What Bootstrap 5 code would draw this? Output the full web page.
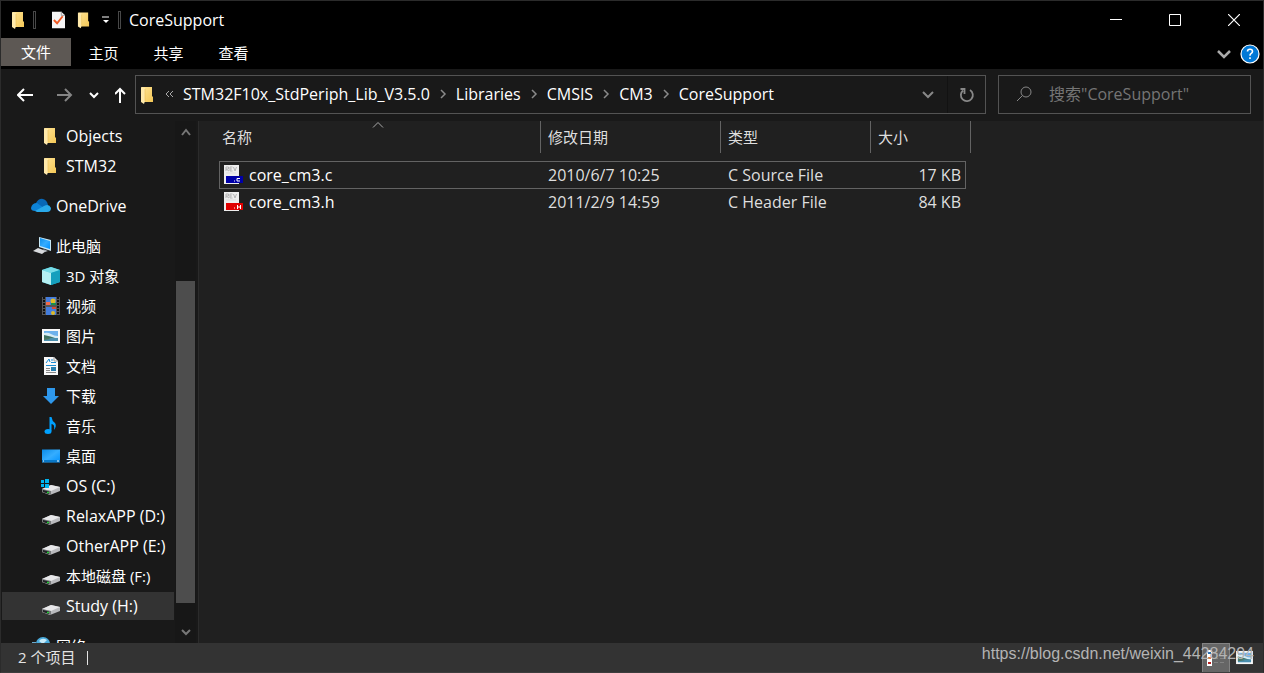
<!DOCTYPE html>
<html lang="zh-CN">
<head>
<meta charset="utf-8">
<meta name="viewport" content="width=device-width, initial-scale=1">
<title>CoreSupport</title>
<link href="https://cdn.jsdelivr.net/npm/bootstrap@5.3.0/dist/css/bootstrap.min.css" rel="stylesheet">
<style>
  body { font: 16px/20px "Open Sans", "Noto Sans CJK SC", sans-serif; color: #fff; background: #191919; }
  svg { flex: none; display: block; }
  button, .plain-link { border: 0; background: none; padding: 0; color: inherit; display: flex; align-items: center; justify-content: center; text-decoration: none; }
  .zh { font-size: 15px; }
  .window-frame { border: 1px solid #2b2b2b; border-bottom-color: #3d3d3d; }
  .title-bar { height: 37px; background: #000; padding-left: 6px; }
  .quick-access { height: 37px; }
  .separator { width: 3px; height: 18px; border: 1px solid #484848; }
  .caption-button { width: 59px; height: 37px; }
  .ribbon-tabs { height: 31px; background: #000; }
  .ribbon-tab { width: 65px; height: 30px; font-size: 15px; }
  .ribbon-tab.file-tab { width: 70px; height: 28px; background: #5d5854; }
  .ribbon-tools { padding-right: 3px; gap: 8px; }
  .address-row { height: 52px; padding: 6px 12px 7px 0; }
  .nav-buttons { width: 134px; padding-left: 12px; }
  .field-box { border: 1px solid #535353; height: 39px; }
  .crumbs { padding-bottom: 2px; }
  .crumb-start { margin: 0 10px 0 11px; }
  .crumb-sep { margin: 0 9px; color: #8a8a8a; }
  .refresh-button { width: 38px; height: 37px; border-left: 1px solid #121212; }
  .search-box { width: 253px; margin-left: 12px; padding: 0 16px 2px 17px; }
  .search-box input { background: none; border: 0; outline: 0; color: #fff; min-width: 0; padding: 0; margin-left: 17px; }
  .search-box input::placeholder { color: #757575; opacity: 1; }
  .tree-pane { width: 174px; padding-left: 1px; }
  .tree-item { height: 30px; padding-left: 39px; justify-content: flex-start; gap: 5px; border: solid transparent; border-width: 1px 0; background-clip: padding-box; white-space: nowrap; width: 172px; }
  .tree-item svg { width: 20px; height: 20px; }
  .tree-item.top-level { padding-left: 29px; }
  .tree-item.top-level.spaced { margin-top: 10px; }
  .tree-item.selected { background-color: #333; }
  .scroll-bar { width: 23px; background: #171717; border-right: 2px solid #191919; }
  .scroll-thumb { width: 19px; margin-left: 1px; flex: 322 0 0; background: #4d4d4d; }
  .scroll-arrow { width: 21px; }
  .scroll-space-top { flex: 138 0 0; }
  .scroll-space-bottom { flex: 18 0 0; }
  .files-pane { background: #202020; padding-left: 20px; border-left: 1px solid #2b2b2b; }
  .files-table { width: 752px; table-layout: fixed; border-collapse: separate; border-spacing: 0; color: #dedede; }
  .files-table th { font-weight: 400; font-size: 15px; height: 32px; padding: 0 7px; border-right: 1px solid #636363; position: relative; }
  .files-table th:first-child { padding-left: 3px; }
  .files-table tbody::before { content: ""; display: block; height: 8px; }
  .files-table td { height: 28px; padding: 0 7px; border: solid transparent; border-width: 1px 0; white-space: nowrap; }
  .files-table tr + tr td { height: 26px; border-top: 0; }
  .files-table td:first-child { border-left-width: 1px; padding-left: 3px; color: #fff; }
  .files-table td:last-child { border-right-width: 1px; padding-right: 4px; text-align: right; }
  .files-table .focused td { border-color: #636363; }
  .sort-arrow { position: absolute; left: 50%; top: 0; margin-left: -8px; }
  .status-bar { height: 29px; background: #333; padding-left: 17px; color: #e4e4e4; }
  .status-text { padding-bottom: 2px; gap: 12px; }
  .status-divider { width: 1px; height: 14px; background: #e4e4e4; margin-top: 2px; }
  .view-buttons { padding-right: 5px; }
  .view-button { width: 28px; height: 29px; }
  .view-button.active-view { background: #666; border: 1px solid #838383; border-bottom: 0; }
  .watermark { position: absolute; right: 9px; bottom: 8px; font: 16px/20px "Liberation Sans", Arial, sans-serif; color: #b4b4b4; }
</style>
</head>
<body>
<svg width="0" height="0" class="position-absolute" aria-hidden="true">
  <defs>
    <linearGradient id="gold" x1="0" x2="1" y2="1"><stop stop-color="#ffe394"/><stop offset="1" stop-color="#f3c756"/></linearGradient>
    <linearGradient id="sky" x1="0" x2="1" y2="1"><stop stop-color="#0a8be8"/><stop offset=".5" stop-color="#35adff"/><stop offset="1" stop-color="#0091ff"/></linearGradient>
    <symbol id="folder" viewBox="0 0 14 18"><path d="M2 1H12V10L13 11V16H2Z" fill="url(#gold)"/><path d="M1 1L5 2V15L4 18L1 16Z" fill="#ffe9aa"/><path d="M5 3V15" stroke="#e9bd52" stroke-width=".6"/></symbol>
    <symbol id="drive" viewBox="0 0 20 20"><path d="M1 13L10 9L19 11V15L9 19L1 16Z" fill="#b9babd"/><path d="M1 13L10 9L19 11L10 15Z" fill="#e8e8ea"/><path d="M1 13L10 15V19L1 16Z" fill="#77797b"/><path d="M2 14L8 15.500V18L2 16Z" fill="#202325"/><path d="M6 16.500h2" stroke="#25ce37" stroke-width="1.500"/></symbol>
    <symbol id="photo" viewBox="0 0 20 16"><path d="M1 1H19V15H1Z" fill="#f8f8f8"/><path d="M3 3H17V13H3Z" fill="#6db1ec"/><path d="M3 5Q7 4 10 6T17 8V10H3Z" fill="#d5ebf5"/><path d="M3 7Q9 8 17 11H3Z" fill="#3f7464"/><path d="M3 10H17V13H3Z" fill="#4a8fae"/><path d="M3 10Q7 9 10 11L3 12Z" fill="#4d7761"/></symbol>
    <symbol id="source" viewBox="0 0 22 20"><path d="M1 0H16V19H1Z" fill="#eee"/><path d="M3 6V2H5.500V4H3L6 6M9.500 2H7V6H9.500M7 4H9M10.500 2L12 6L13.500 2" fill="none" stroke="#b5b5b5"/><path d="M3 8H13" stroke="#ddd"/></symbol>
    <symbol id="down" viewBox="0 0 14 10"><path d="M2 2L7 7L12 2" fill="none" stroke="currentColor" stroke-width="2"/></symbol>
    <symbol id="right" viewBox="0 0 8 12"><path d="M2 2L6 6L2 10" fill="none" stroke="currentColor" stroke-width="1.500"/></symbol>
  </defs>
</svg>

<div class="window-frame vh-100 d-flex flex-column overflow-hidden position-relative">
  <header class="title-bar d-flex align-items-start flex-shrink-0">
    <div class="quick-access d-flex align-items-center">
      <svg width="14" height="18" class="ms-1"><use href="#folder"/></svg>
      <span class="separator ms-2"></span>
      <button aria-label="属性" class="ms-3"><svg width="13" height="18" viewBox="0 0 14 18"><path d="M0 0H10L14 4V18H0Z" fill="#f5f5f5"/><path d="M10 0V4H14" fill="none" stroke="#999"/><path d="M2 9L5.500 12.500L11.500 5" fill="none" stroke="#f15a24" stroke-width="2"/></svg></button>
      <button aria-label="新建文件夹" class="ms-2 ps-1"><svg width="13" height="18"><use href="#folder"/></svg></button>
      <button aria-label="自定义快速访问工具栏" class="ms-2 ps-1"><svg width="8" height="8"><path d="M0 1H7" stroke="#fff"/><path d="M1 4H7L4 7Z" fill="#fff"/></svg></button>
      <span class="separator mx-2 ms-2"></span>
      <span class="window-title">CoreSupport</span>
    </div>
    <div class="ms-auto d-flex">
      <button class="caption-button" aria-label="最小化"><svg width="12" height="12"><path d="M0 5.500H12" stroke="#fff"/></svg></button>
      <button class="caption-button" aria-label="最大化"><svg width="12" height="12"><path d="M.5.500H11.500V11.500H.5Z" fill="none" stroke="#fff"/></svg></button>
      <button class="caption-button" aria-label="关闭"><svg width="12" height="12"><path d="M0 0L12 12M12 0L0 12" stroke="#fff" stroke-width="1.200"/></svg></button>
    </div>
  </header>

  <nav class="ribbon-tabs d-flex align-items-start flex-shrink-0">
    <a href="#" class="plain-link ribbon-tab file-tab">文件</a>
    <a href="#" class="plain-link ribbon-tab">主页</a>
    <a href="#" class="plain-link ribbon-tab">共享</a>
    <a href="#" class="plain-link ribbon-tab">查看</a>
    <div class="ribbon-tools ms-auto d-flex align-items-center h-100">
      <button aria-label="展开功能区" style="color:#aaa"><svg width="16" height="12"><path d="M2 3L8 9L14 3" fill="none" stroke="currentColor" stroke-width="2.500"/></svg></button>
      <button aria-label="帮助"><svg width="20" height="20"><circle cx="10" cy="10" r="9" fill="#0078d7" stroke="#fff" stroke-width="1.200"/><path d="M7.500 7.500Q7.500 5.300 10 5.300T12.500 7.500Q12.500 8.700 11 9.600Q10 10.200 10 11.700M10 13.300V15" fill="none" stroke="#fff" stroke-width="1.600"/></svg></button>
    </div>
  </nav>

  <div class="address-row d-flex flex-shrink-0">
    <div class="nav-buttons d-flex align-items-center">
      <button aria-label="后退" class="ms-1"><svg width="16" height="14"><path d="M16 7H1M7 1L1 7L7 13" fill="none" stroke="#fff" stroke-width="2"/></svg></button>
      <button aria-label="前进" class="ms-4" style="color:#858585"><svg width="16" height="14"><path d="M0 7H14M8 1L14 7L8 13" fill="none" stroke="currentColor" stroke-width="2"/></svg></button>
      <button aria-label="最近位置" class="ms-3"><svg width="10" height="8"><path d="M1 2L5 6L9 2" fill="none" stroke="#fff" stroke-width="2"/></svg></button>
      <button aria-label="向上" class="ms-3"><svg width="12" height="16"><path d="M5 16V2M0 7L5 2L10 7" fill="none" stroke="#fff" stroke-width="2"/></svg></button>
    </div>
    <div class="field-box address-box d-flex align-items-center flex-grow-1 ps-1">
      <svg width="14" height="18"><use href="#folder"/></svg>
      <nav class="crumbs d-flex align-items-center">
        <svg width="8" height="8" class="crumb-start"><path d="M4 1L1 4L4 7M8 1L5 4L8 7" fill="none" stroke="#aaa"/></svg>
        <a href="#" class="plain-link">STM32F10x_StdPeriph_Lib_V3.5.0</a><svg class="crumb-sep" width="8" height="12"><use href="#right"/></svg>
        <a href="#" class="plain-link">Libraries</a><svg class="crumb-sep" width="8" height="12"><use href="#right"/></svg>
        <a href="#" class="plain-link">CMSIS</a><svg class="crumb-sep" width="8" height="12"><use href="#right"/></svg>
        <a href="#" class="plain-link">CM3</a><svg class="crumb-sep" width="8" height="12"><use href="#right"/></svg>
        <a href="#" class="plain-link">CoreSupport</a>
      </nav>
      <button aria-label="以前的位置" class="ms-auto me-2 pe-1" style="color:#888"><svg width="14" height="10"><use href="#down"/></svg></button>
      <button aria-label="刷新" class="refresh-button"><svg width="18" height="18"><path d="M12 4A6 6 0 1 1 5 4.500M2.500 3H6.500V8" fill="none" stroke="#888" stroke-width="1.800"/></svg></button>
    </div>
    <label class="field-box search-box d-flex align-items-center">
      <svg width="16" height="16"><circle cx="10" cy="6" r="5" fill="none" stroke="#888"/><path d="M6.500 9.500L1 15" stroke="#888"/></svg>
      <input type="text" placeholder="搜索&quot;CoreSupport&quot;" aria-label="搜索">
    </label>
  </div>

  <main class="d-flex flex-grow-1 overflow-hidden">
    <nav class="tree-pane flex-shrink-0 overflow-hidden">
      <a href="#" class="plain-link tree-item"><svg><use href="#folder" x="2" y="1" width="14" height="18"/></svg>Objects</a>
      <a href="#" class="plain-link tree-item"><svg><use href="#folder" x="2" y="1" width="14" height="18"/></svg>STM32</a>
      <a href="#" class="plain-link tree-item top-level spaced"><svg viewBox="0 0 20 20"><path d="M5 7Q8 2 12 3Q16 4 17 9L13 13L4 10Z" fill="#0868b7"/><path d="M0 12Q1 7 6 7L17 15H4Q0 15 0 12Z" fill="#0d83d8"/><path d="M4 15L13 10Q18 7 20 12Q20 16 16 16H6Z" fill="#29a9ea"/></svg>OneDrive</a>
      <a href="#" class="plain-link tree-item top-level spaced zh"><svg viewBox="0 0 20 20"><path d="M8 1L20 4V15L8 11Z" fill="#c8e8f6"/><path d="M9 2L19 5V13L9 10Z" fill="url(#sky)"/><path d="M2 15L7 12L15 15L11 18Z" fill="#d8dadd"/><path d="M12 13L17 15L14 16Z" fill="#aeb4ba"/></svg>此电脑</a>
      <a href="#" class="plain-link tree-item zh"><svg viewBox="0 0 20 20"><path d="M1 4L10 1L19 4V16L10 19L1 16Z" fill="#28bfd4"/><path d="M1 4L10 1L19 4L10 7Z" fill="#77dce7"/><path d="M1 4L10 7V19L1 16Z" fill="#b5f0f3"/><path d="M10 7L19 4V16L10 19Z" fill="#159fbd"/></svg>3D 对象</a>
      <a href="#" class="plain-link tree-item zh"><svg viewBox="0 0 20 20"><path d="M1 1H19V19H1Z" fill="#555"/><path d="M3 1V19M17 1V19" stroke="#111" stroke-width="2" stroke-dasharray="2 1"/><path d="M5 1H15V9H5ZM5 11H15V19H5Z" fill="#447ddd"/><path d="M5 6H9V9H5Z" fill="#f36b49"/><circle cx="12" cy="5" r="2.500" fill="#e2bb26"/><path d="M10 7H15V9H10Z" fill="#198f4c"/><path d="M11 11H15V13H11Z" fill="#d64b36"/><circle cx="12" cy="17" r="2" fill="#ddba28"/></svg>视频</a>
      <a href="#" class="plain-link tree-item zh"><svg><use href="#photo" y="2" width="20" height="16"/></svg>图片</a>
      <a href="#" class="plain-link tree-item zh"><svg viewBox="0 0 20 20"><path d="M3 1H13L17 5V19H3Z" fill="#f8f8f8"/><path d="M13 1V5H17" fill="none" stroke="#999"/><path d="M5 7L8 3L9 6M10 4H12M10 6.500H15M5 9.500H15" fill="none" stroke="#168bd5"/><path d="M5 12.500H9M5 14.500H9M5 16.500H15" stroke="#888"/><path d="M10 11H15V15H10Z" fill="#267faf"/></svg>文档</a>
      <a href="#" class="plain-link tree-item zh"><svg viewBox="0 0 20 20"><path d="M6 2H14V10H18L10 18L2 10H6Z" fill="#2e98ec"/></svg>下载</a>
      <a href="#" class="plain-link tree-item zh"><svg viewBox="0 0 20 20"><ellipse cx="7" cy="15.500" rx="3.500" ry="2.500" fill="#00a1ff"/><path d="M8.500 1H10.500Q11 5 14 7Q16 10 13 14Q14 8 10.500 8V15H8.500Z" fill="#00a1ff"/></svg>音乐</a>
      <a href="#" class="plain-link tree-item zh"><svg viewBox="0 0 20 20"><path d="M1 3.500H19V16.500H1Z" fill="url(#sky)"/><path d="M1 15H19" stroke="#0878c8" stroke-width="2"/><path d="M2 15H3M16 15H18" stroke="#fff"/></svg>桌面</a>
      <a href="#" class="plain-link tree-item"><svg><use href="#drive" width="20" height="20"/><path d="M0 4H3V7H0ZM4 3H8V7H4ZM0 8H3V11H0ZM4 8H8V12H4Z" fill="#00b5ef"/></svg>OS (C:)</a>
      <a href="#" class="plain-link tree-item"><svg><use href="#drive" width="20" height="20"/></svg>RelaxAPP (D:)</a>
      <a href="#" class="plain-link tree-item"><svg><use href="#drive" width="20" height="20"/></svg>OtherAPP (E:)</a>
      <a href="#" class="plain-link tree-item zh"><svg><use href="#drive" width="20" height="20"/></svg>本地磁盘 (F:)</a>
      <a href="#" class="plain-link tree-item selected"><svg><use href="#drive" width="20" height="20"/></svg>Study (H:)</a>
      <a href="#" class="plain-link tree-item top-level spaced zh"><svg viewBox="0 0 20 20"><circle cx="12" cy="8" r="7" fill="#4aabdc"/><path d="M8 5Q11 1 16 4L12 8Z" fill="#c7eaf8"/><path d="M1 6H5V13H1Z" fill="#6aa9cd"/></svg>网络</a>
    </nav>
    <div class="scroll-bar d-flex flex-column flex-shrink-0">
      <button aria-label="向上滚动" class="scroll-arrow" style="color:#777"><svg width="14" height="22"><path d="M3 14L7 9L11 14" fill="none" stroke="currentColor" stroke-width="2"/></svg></button>
      <div class="scroll-space-top"></div>
      <div class="scroll-thumb"></div>
      <div class="scroll-space-bottom"></div>
      <button aria-label="向下滚动" class="scroll-arrow" style="color:#777"><svg width="14" height="22"><path d="M3 9L7 13L11 9" fill="none" stroke="currentColor" stroke-width="2"/></svg></button>
    </div>
    <section class="files-pane flex-grow-1">
      <table class="files-table">
        <colgroup><col style="width:322px"><col style="width:180px"><col style="width:150px"><col style="width:95px"><col style="width:5px"></colgroup>
        <thead><tr>
          <th>名称<svg class="sort-arrow" width="12" height="8"><path d="M1 6.500L6 1.500L11 6.500" fill="none" stroke="#aaa"/></svg></th>
          <th>修改日期</th><th>类型</th><th colspan="2">大小</th>
        </tr></thead>
        <tbody>
          <tr class="focused">
            <td><span class="d-flex align-items-center gap-1"><svg width="22" height="20"><use href="#source"/><path d="M3 11H20V18H3Z" fill="#0000a8"/><path d="M11 16H12M17 13.500H14V16H17" fill="none" stroke="#fff"/></svg>core_cm3.c</span></td>
            <td>2010/6/7 10:25</td><td>C Source File</td><td>17 KB</td>
          </tr>
          <tr>
            <td><span class="d-flex align-items-center gap-1"><svg width="22" height="20"><use href="#source"/><path d="M3 11H20V18H3Z" fill="#e00000"/><path d="M11 16H12M14.500 13V17M14 15H17M17.500 13V17" fill="none" stroke="#fff"/></svg>core_cm3.h</span></td>
            <td>2011/2/9 14:59</td><td>C Header File</td><td>84 KB</td>
          </tr>
        </tbody>
      </table>
    </section>
  </main>

  <footer class="status-bar d-flex align-items-center flex-shrink-0">
    <div class="status-text d-flex align-items-center zh"><span>2 个项目</span><span class="status-divider"></span></div>
    <div class="view-buttons ms-auto d-flex">
      <button class="view-button active-view" aria-label="详细信息"><svg width="20" height="18"><path d="M1 1H6V17H1Z" fill="#fff"/><path d="M2 4H5" stroke="#2b6fae" stroke-width="2"/><path d="M2 9H5" stroke="#df7741" stroke-width="2"/><path d="M2 14H5" stroke="#b22" stroke-width="2"/><path d="M8 4.500H12M14 4.500H18M8 9.500H12M14 9.500H18M8 13.500H12M14 13.500H18" stroke="#838383"/></svg></button>
      <button class="view-button" aria-label="大缩略图"><svg width="19" height="15"><use href="#photo" width="19" height="15"/></svg></button>
    </div>
  </footer>
  <div class="watermark">https://blog.csdn.net/weixin_44284294</div>
</div>
<script src="https://cdn.jsdelivr.net/npm/bootstrap@5.3.0/dist/js/bootstrap.bundle.min.js"></script>
</body>
</html>
